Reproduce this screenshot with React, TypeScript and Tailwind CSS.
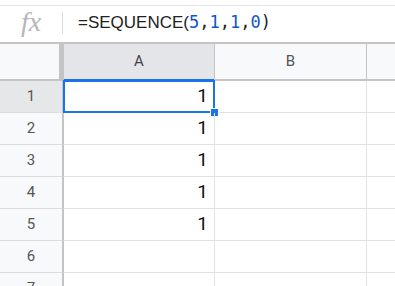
const rows = [1, 2, 3, 4, 5, 6, 7];

const FONT = { fontFamily: "Roboto, 'Liberation Sans', Arial, sans-serif" };

function FormulaBar() {
  return (
    <div className="h-[39px] border-t border-b-2 border-t-[#e3e3e3] border-b-[#c4c4c4] mt-[5px] flex items-center bg-white">
      <div className="w-[62px] flex items-center justify-center">
        <span
          className="text-[28px] italic text-[#b6b6b6] leading-none -mt-[5px]"
          style={{ fontFamily: "'Liberation Serif', 'DejaVu Serif', serif" }}
        >
          fx
        </span>
      </div>
      <div className="w-px h-[22px] bg-[#dadada] -mt-[2px]" />
      <div className="pl-[15px] flex items-center text-[17px] text-[#222] -mt-[3px]">
        <span style={{ fontFamily: "'Liberation Sans', Arial, sans-serif" }}>=SEQUENCE(</span>
        <span style={{ fontFamily: "'DejaVu Sans Mono', 'Liberation Mono', monospace" }}>
          <span className="text-[#1155cc]">5</span>,<span className="text-[#1155cc]">1</span>,
          <span className="text-[#1155cc]">1</span>,<span className="text-[#1155cc]">0</span>)
        </span>
      </div>
    </div>
  );
}

function HeaderRow() {
  return (
    <div className="flex h-[37px] border-b-2 border-[#c4c4c4] text-[15px]" style={FONT}>
      <div className="w-[64px] bg-[#f8f9fa] border-r-[5px] border-[#c4c4c4]" />
      <div className="w-[151px] bg-[#e3e5e8] border-r border-[#c4c4c4] flex items-center justify-center text-[#444] relative">
        A
        <div className="absolute left-0 right-0 -bottom-[2px] h-[2px] bg-[#1a73e8]" />
      </div>
      <div className="w-[152px] bg-[#f8f9fa] border-r border-[#c4c4c4] flex items-center justify-center text-[#555]">
        B
      </div>
      <div className="flex-1 bg-[#f8f9fa]" />
    </div>
  );
}

function Row({ n }: { n: number }) {
  const selected = n === 1;
  const value = n <= 5 ? "1" : "";
  return (
    <div className="flex h-[32px]" style={FONT}>
      <div
        className={`w-[64px] border-r-2 border-r-[#c4c4c4] border-b border-b-[#dcdcdc] flex items-center justify-center text-[15px] text-[#555] ${
          selected ? "bg-[#e6e7e9]" : "bg-[#f8f9fa]"
        }`}
      >
        {n}
      </div>
      <div className="w-[151px] border-r border-b border-[#e2e2e2] flex items-center justify-end pr-[6px] text-[19px] text-[#111] relative">
        {value}
        {selected && (
          <>
            <div className="absolute -left-[1px] -top-px right-[-1px] bottom-[-1px] border-2 border-[#1a73e8]" />
            <div className="absolute -right-[5px] -bottom-[5px] w-[9px] h-[9px] bg-[#1a73e8] border border-white" />
          </>
        )}
      </div>
      <div className="w-[152px] border-r border-b border-[#e2e2e2]" />
      <div className="flex-1 border-b border-[#e2e2e2]" />
    </div>
  );
}

export default function App() {
  return (
    <div className="w-[395px] h-[286px] overflow-hidden bg-white">
      <FormulaBar />
      <HeaderRow />
      {rows.map((n) => (
        <Row key={n} n={n} />
      ))}
    </div>
  );
}
